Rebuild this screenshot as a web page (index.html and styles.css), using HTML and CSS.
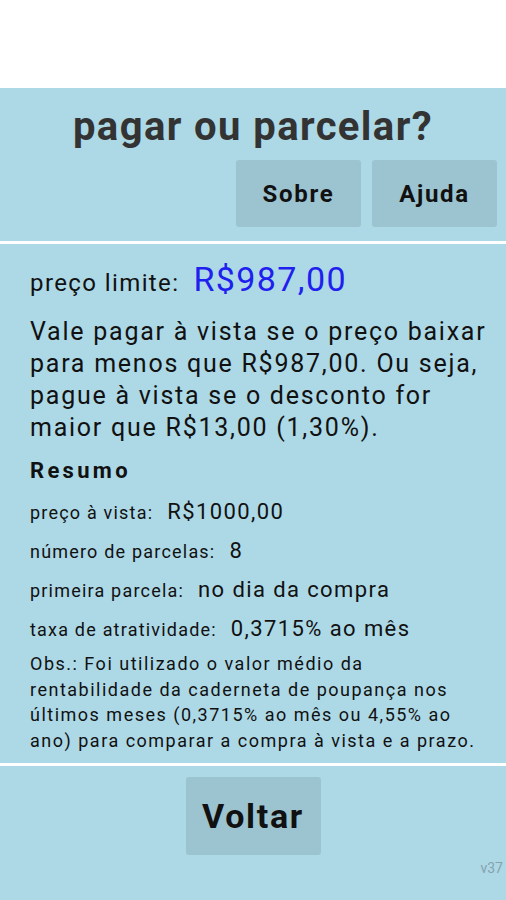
FILE: index.html
```html
<!DOCTYPE html>
<html lang="pt-BR">
<head>
    <meta charset="UTF-8">
    <meta name="viewport" content="width=device-width, initial-scale=1.0">
    <title>pagar ou parcelar?</title>
    <link rel="stylesheet" href="styles.css">
</head>
<body>
    <div class="topbar"></div>
    <div class="app">
        <div class="header">
            <h1>pagar ou parcelar?</h1>
            <div class="header-buttons">
                <button class="btn">Sobre</button>
                <button class="btn">Ajuda</button>
            </div>
        </div>
        <div class="divider"></div>
        <div class="content">
            <p class="limit">
                <span class="limit-label">preço limite:</span>
                <span class="limit-value">R$987,00</span>
            </p>
            <p class="verdict">Vale pagar à vista se o preço baixar para menos que R$987,00. Ou seja, pague à vista se o desconto for maior que R$13,00 (1,30%).</p>
            <h3>Resumo</h3>
            <p class="row"><span class="label">preço à vista:</span><span class="value">R$1000,00</span></p>
            <p class="row"><span class="label">número de parcelas:</span><span class="value">8</span></p>
            <p class="row"><span class="label">primeira parcela:</span><span class="value">no dia da compra</span></p>
            <p class="row"><span class="label">taxa de atratividade:</span><span class="value">0,3715% ao mês</span></p>
            <p class="obs">Obs.: Foi utilizado o valor médio da<br>rentabilidade da caderneta de poupança nos<br>últimos meses (0,3715% ao mês ou 4,55% ao<br>ano) para comparar a compra à vista e a prazo.</p>
        </div>
        <div class="divider"></div>
        <div class="footer">
            <button class="btn btn-big">Voltar</button>
            <span class="version">v37</span>
        </div>
    </div>
</body>
</html>
```

FILE: styles.css
```css
* {
    margin: 0;
    padding: 0;
    box-sizing: border-box;
    font-family: Roboto, "Liberation Sans", sans-serif;
}

body {
    background: #FFFFFF;
    color: #111111;
}

.topbar {
    height: 88px;
}

.app {
    background: #ADD8E6;
    min-height: 812px;
}

.header {
    padding-top: 8px;
}

h1 {
    text-align: center;
    font-size: 40px;
    font-weight: bold;
    color: #333333;
    line-height: 62px;
    letter-spacing: 1.4px;
    margin-bottom: 2px;
}

.header-buttons {
    display: flex;
    justify-content: flex-end;
    gap: 11px;
    padding: 0 9px 14px 0;
}

.btn {
    width: 125px;
    height: 67px;
    border: none;
    border-radius: 3px;
    background: #9CC3D0;
    color: #111111;
    font-size: 24px;
    font-weight: bold;
    letter-spacing: 1.7px;
}

.divider {
    height: 3px;
    background: #FFFFFF;
}

.content {
    padding: 12px 6px 10px 30px;
}

.limit {
    display: flex;
    align-items: baseline;
    gap: 14px;
    line-height: 46px;
}

.limit-label {
    font-size: 24px;
    letter-spacing: 1.4px;
}

.limit-value {
    font-size: 34px;
    color: #1F1FEF;
    letter-spacing: 1.4px;
}

.verdict {
    font-size: 25px;
    line-height: 32px;
    margin-top: 10px;
    letter-spacing: 1.75px;
}

h3 {
    font-size: 22px;
    font-weight: bold;
    line-height: 30px;
    margin: 12px 0 7px;
    letter-spacing: 3.3px;
}

.row {
    display: flex;
    align-items: baseline;
    gap: 14px;
    height: 39px;
    padding-top: 8px;
}

.label {
    font-size: 18px;
    letter-spacing: 1.2px;
    line-height: 1;
}

.value {
    font-size: 22px;
    letter-spacing: 1.4px;
    line-height: 1;
}

.obs {
    font-size: 18px;
    line-height: 25.5px;
    margin-top: 2px;
    letter-spacing: 1.5px;
    white-space: nowrap;
}

.footer {
    position: relative;
    display: flex;
    justify-content: center;
    padding: 11px 0 45px;
}

.btn-big {
    width: 135px;
    height: 78px;
    font-size: 34px;
    letter-spacing: 1.7px;
}

.version {
    position: absolute;
    right: 3px;
    bottom: 24px;
    font-size: 14px;
    color: #86A3AD;
}
```
